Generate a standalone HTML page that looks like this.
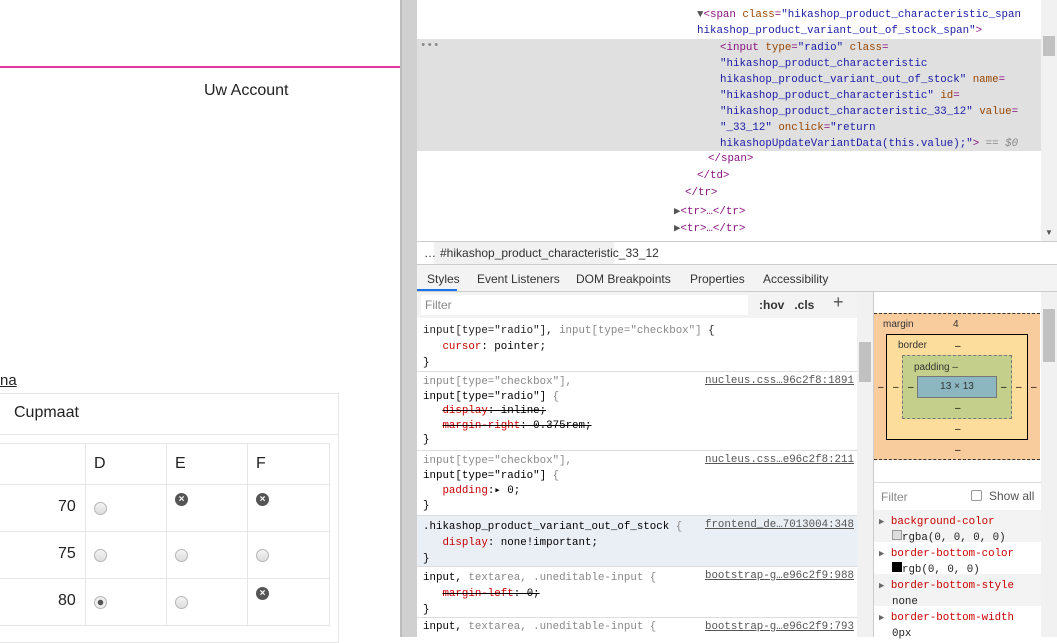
<!DOCTYPE html>
<html><head><meta charset="utf-8"><style>
*{margin:0;padding:0;box-sizing:border-box}
body{width:1057px;height:637px;overflow:hidden;background:#fff;position:relative;font-family:"Liberation Sans",sans-serif}
.a{position:absolute}
.m{font-family:"Liberation Mono","DejaVu Sans Mono",monospace;font-size:10.8px;white-space:pre}
.tg{color:#881280}.at{color:#994500}.v{color:#1a1aa6}.g{color:#888}
.rad{position:absolute;width:13px;height:13px;border-radius:50%;border:1px solid #b5b5b5;background:linear-gradient(#f4f4f4,#ddd)}
.x{position:absolute;width:13px;height:13px;border-radius:50%;background:#555;color:#fff;font-size:10px;line-height:13px;text-align:center;font-weight:bold}
.td{position:absolute;font-size:16px;color:#222}
.rl{color:#222}.p{color:#c80000}
.lk{position:absolute;right:203px;color:#555;text-decoration:underline}
</style></head><body>
<div class="a" style="left:0;top:66px;width:400px;height:2px;background:#e0359c"></div>
<div class="a" style="left:204px;top:82px;font-size:16px;color:#222">Uw Account</div>
<div class="a" style="left:0;top:372px;font-size:15px;color:#222;text-decoration:underline">na</div>
<div class="a" style="left:-2px;top:393px;width:341px;height:250px;border:1px solid #e6e6e6"></div>
<div class="a" style="left:0;top:434px;width:338px;height:1px;background:#e6e6e6"></div>
<div class="a" style="left:14px;top:404px;font-size:16px;color:#222">Cupmaat</div>
<div class="a" style="left:-2px;top:443px;width:332px;height:183px;border:1px solid #e6e6e6"></div>
<div class="a" style="left:0;top:484px;width:329px;height:1px;background:#e6e6e6"></div>
<div class="a" style="left:0;top:531px;width:329px;height:1px;background:#e6e6e6"></div>
<div class="a" style="left:0;top:578px;width:329px;height:1px;background:#e6e6e6"></div>
<div class="a" style="left:85px;top:443px;width:1px;height:183px;background:#e6e6e6"></div>
<div class="a" style="left:166px;top:443px;width:1px;height:183px;background:#e6e6e6"></div>
<div class="a" style="left:247px;top:443px;width:1px;height:183px;background:#e6e6e6"></div>
<div class="td" style="left:94px;top:455px">D</div><div class="td" style="left:175px;top:455px">E</div><div class="td" style="left:256px;top:455px">F</div>
<div class="td" style="left:58px;top:498px">70</div><div class="td" style="left:58px;top:545px">75</div><div class="td" style="left:58px;top:592px">80</div>
<div class="rad" style="left:94px;top:502px"></div><div class="x" style="left:175px;top:493px">×</div><div class="x" style="left:256px;top:493px">×</div>
<div class="rad" style="left:94px;top:549px"></div><div class="rad" style="left:175px;top:549px"></div><div class="rad" style="left:256px;top:549px"></div>
<div class="rad" style="left:94px;top:596px;background:radial-gradient(#555 0 2.5px,#eee 3px)"></div><div class="rad" style="left:175px;top:596px"></div><div class="x" style="left:256px;top:587px">×</div>
<div class="a" style="left:400px;top:0;width:17px;height:637px;background:#d0d0d0;border-left:2px solid #bdbdbd"></div>
<div class="a" style="left:417px;top:0;width:640px;height:242px;background:#fff"></div>
<div class="a" style="left:417px;top:39px;width:624px;height:112px;background:#e0e0e0"></div>
<div class="a" style="left:1041px;top:0;width:16px;height:242px;background:#f1f1f1"></div>
<div class="a" style="left:1043px;top:36px;width:12px;height:20px;background:#c1c1c1"></div>
<div class="a" style="left:1045px;top:228px;font-size:8px;color:#555">▼</div>
<div class="a m g" style="left:420px;top:40px">•••</div>
<div class="a m" style="left:697px;top:7px;line-height:16px"><span style="color:#555">▼</span><span class="tg">&lt;span</span> <span class="at">class</span><span class="tg">=</span><span class="v">"hikashop_product_characteristic_span
hikashop_product_variant_out_of_stock_span"</span><span class="tg">&gt;</span></div>
<div class="a m" style="left:720px;top:40px;line-height:16px"><span class="tg">&lt;input</span> <span class="at">type</span><span class="tg">=</span><span class="v">"radio"</span> <span class="at">class</span><span class="tg">=</span>
<span class="v">"hikashop_product_characteristic
hikashop_product_variant_out_of_stock"</span> <span class="at">name</span><span class="tg">=</span>
<span class="v">"hikashop_product_characteristic"</span> <span class="at">id</span><span class="tg">=</span>
<span class="v">"hikashop_product_characteristic_33_12"</span> <span class="at">value</span><span class="tg">=</span>
<span class="v">"_33_12"</span> <span class="at">onclick</span><span class="tg">=</span><span class="v">"return
hikashopUpdateVariantData(this.value);"</span><span class="tg">&gt;</span> <span class="g"><i>== $0</i></span></div>
<div class="a m tg" style="left:708px;top:153px">&lt;/span&gt;</div>
<div class="a m tg" style="left:697px;top:170px">&lt;/td&gt;</div>
<div class="a m tg" style="left:685px;top:187px">&lt;/tr&gt;</div>
<div class="a m tg" style="left:674px;top:204px"><span style="color:#555">▶</span>&lt;tr&gt;…&lt;/tr&gt;</div>
<div class="a m tg" style="left:674px;top:221px"><span style="color:#555">▶</span>&lt;tr&gt;…&lt;/tr&gt;</div>
<div class="a" style="left:417px;top:241px;width:640px;height:24px;background:#fff;border-top:1px solid #ccc;border-bottom:1px solid #ccc"></div>
<div class="a" style="left:434px;top:242px;width:180px;height:22px;background:#f1f1f1"></div>
<div class="a" style="left:424px;top:246px;font-size:12px;color:#333">…</div>
<div class="a" style="left:440px;top:246px;font-size:12px;color:#333">#hikashop_product_characteristic_33_12</div>
<div class="a" style="left:417px;top:265px;width:640px;height:27px;background:#f3f3f3;border-bottom:1px solid #ccc"></div>
<div class="a" style="left:417px;top:289px;width:40px;height:2px;background:#1a73e8"></div>
<div class="a" style="left:427px;top:272px;font-size:12px;color:#333">Styles</div>
<div class="a" style="left:477px;top:272px;font-size:12px;color:#333">Event Listeners</div>
<div class="a" style="left:576px;top:272px;font-size:12px;color:#333">DOM Breakpoints</div>
<div class="a" style="left:690px;top:272px;font-size:12px;color:#333">Properties</div>
<div class="a" style="left:763px;top:272px;font-size:12px;color:#333">Accessibility</div>
<div class="a" style="left:417px;top:292px;width:456px;height:345px;background:#fff"></div>
<div class="a" style="left:417px;top:292px;width:456px;height:26px;background:#f3f3f3"></div>
<div class="a" style="left:421px;top:295px;width:327px;height:20px;background:#fff"></div>
<div class="a" style="left:425px;top:298px;font-size:12px;color:#888">Filter</div>
<div class="a" style="left:759px;top:298px;font-size:12px;color:#333;font-weight:bold;white-space:pre">:hov   .cls</div>
<div class="a" style="left:833px;top:292px;font-size:18px;color:#555">+</div>
<div class="a" style="left:857px;top:292px;width:16px;height:345px;background:#f1f1f1"></div>
<div class="a" style="left:859px;top:342px;width:12px;height:40px;background:#c1c1c1"></div>
<div class="a" style="left:417px;top:371px;width:440px;height:1px;background:#ddd"></div>
<div class="a" style="left:417px;top:450px;width:440px;height:1px;background:#ddd"></div>
<div class="a" style="left:417px;top:515px;width:440px;height:52px;background:#eaeef5;border-top:1px solid #ddd;border-bottom:1px solid #ddd"></div>
<div class="a" style="left:417px;top:617px;width:440px;height:1px;background:#ddd"></div>
<div class="a m" style="left:423px;top:323px;line-height:16px"><span class="rl">input[type="radio"], <span class="g">input[type="checkbox"]</span> {</span>
   <span class="p">cursor</span>: pointer;
}</div>
<div class="a m" style="left:423px;top:375px;line-height:14.5px"><span class="g">input[type="checkbox"],</span>
input[type="radio"] <span class="g">{</span>
   <s><span class="p">display</span>: inline;</s>
   <s><span class="p">margin-right</span>: 0.375rem;</s>
}</div>
<div class="a m" style="left:423px;top:454px;line-height:15px"><span class="g">input[type="checkbox"],</span>
input[type="radio"] <span class="g">{</span>
   <span class="p">padding</span>:▸ 0;
}</div>
<div class="a m" style="left:423px;top:519px;line-height:16px">.hikashop_product_variant_out_of_stock <span class="g">{</span>
   <span class="p">display</span>: none!important;
}</div>
<div class="a m" style="left:423px;top:570px;line-height:16px">input, <span class="g">textarea, .uneditable-input {</span>
   <s><span class="p">margin-left</span>: 0;</s>
}</div>
<div class="a m" style="left:423px;top:621px">input, <span class="g">textarea, .uneditable-input {</span></div>
<div class="m lk" style="top:375px">nucleus.css…96c2f8:1891</div>
<div class="m lk" style="top:454px">nucleus.css…e96c2f8:211</div>
<div class="m lk" style="top:519px">frontend_de…7013004:348</div>
<div class="m lk" style="top:570px">bootstrap-g…e96c2f9:988</div>
<div class="m lk" style="top:621px">bootstrap-g…e96c2f9:793</div>
<div class="a" style="left:873px;top:292px;width:184px;height:345px;background:#fff;border-left:1px solid #ccc"></div>
<div class="a" style="left:1041px;top:292px;width:16px;height:345px;background:#f1f1f1"></div>
<div class="a" style="left:1043px;top:309px;width:12px;height:53px;background:#c1c1c1"></div>
<div class="a" style="left:874px;top:313px;width:166px;height:147px;background:#f9cc9d;border-top:1px dashed #333;border-bottom:1px dashed #333"></div>
<div class="a" style="left:883px;top:319px;font-size:10px;color:#333">margin</div>
<div class="a" style="left:953px;top:319px;font-size:10px;color:#333">4</div>
<div class="a" style="left:886px;top:334px;width:142px;height:106px;background:#fddd9b;border:1px solid #000"></div>
<div class="a" style="left:898px;top:340px;font-size:10px;color:#333">border</div>
<div class="a" style="left:902px;top:355px;width:110px;height:64px;background:#c3cf8a;border:1px dashed #777"></div>
<div class="a" style="left:914px;top:362px;font-size:10px;color:#333">padding –</div>
<div class="a" style="left:917px;top:376px;width:80px;height:22px;background:#8cb6c0;border:1px solid #777;font-size:10px;color:#333;text-align:center;line-height:20px">13 × 13</div>
<div class="a" style="left:878px;top:382px;font-size:10px">–</div><div class="a" style="left:893px;top:382px;font-size:10px">–</div><div class="a" style="left:908px;top:382px;font-size:10px">–</div>
<div class="a" style="left:1001px;top:382px;font-size:10px">–</div><div class="a" style="left:1016px;top:382px;font-size:10px">–</div><div class="a" style="left:1031px;top:382px;font-size:10px">–</div>
<div class="a" style="left:955px;top:341px;font-size:10px">–</div>
<div class="a" style="left:955px;top:403px;font-size:10px">–</div>
<div class="a" style="left:955px;top:424px;font-size:10px">–</div>
<div class="a" style="left:955px;top:445px;font-size:10px">–</div>
<div class="a" style="left:874px;top:482px;width:167px;height:1px;background:#ddd"></div>
<div class="a" style="left:881px;top:490px;font-size:12px;color:#888">Filter</div>
<div class="a" style="left:971px;top:490px;width:11px;height:11px;border:1px solid #999;border-radius:2px"></div>
<div class="a" style="left:989px;top:489px;font-size:12px;color:#555">Show all</div>
<div class="a" style="left:874px;top:510px;width:167px;height:32px;background:#f3f3f3"></div>
<div class="a" style="left:874px;top:574px;width:167px;height:32px;background:#f3f3f3"></div>
<div class="a m" style="left:879px;top:514px;line-height:16px;color:#222"><span style="font-size:9px;color:#666">▶</span> <span class="p">background-color</span>
  <span style="display:inline-block;width:10px;height:10px;border:1px solid #999;background:#ddd"></span>rgba(0, 0, 0, 0)
<span style="font-size:9px;color:#666">▶</span> <span class="p">border-bottom-color</span>
  <span style="display:inline-block;width:10px;height:10px;background:#000"></span>rgb(0, 0, 0)
<span style="font-size:9px;color:#666">▶</span> <span class="p">border-bottom-style</span>
  none
<span style="font-size:9px;color:#666">▶</span> <span class="p">border-bottom-width</span>
  0px</div>
</body></html>
